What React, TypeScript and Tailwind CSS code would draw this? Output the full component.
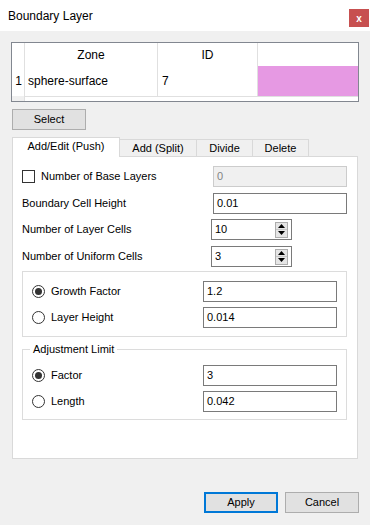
import React from 'react';

const font = { fontFamily: '"Liberation Sans", Arial, sans-serif' };

function TextBox({ value, width = 'w-[134px]', disabled = false }: { value: string; width?: string; disabled?: boolean }) {
    return (
        <div
            className={`${width} h-[21px] flex items-center pl-[3px] border text-[11px] ${
                disabled ? 'border-[#cccccc] bg-[#f0f0f0] text-[#838383]' : 'border-[#7a7a7a] bg-white text-black'
            }`}
        >
            {value}
        </div>
    );
}

function SpinBox({ value }: { value: string }) {
    return (
        <div className="w-[81px] h-[21px] flex items-center justify-between pl-[3px] pr-[3px] border border-[#7a7a7a] bg-white text-[11px]">
            <span>{value}</span>
            <div className="w-[13px] h-[16px] flex flex-col border border-[#adadad] bg-[#e5e5e5]">
                <div className="flex-1 flex items-center justify-center border-b border-[#c8c8c8]">
                    <svg width="7" height="4" viewBox="0 0 7 4"><path d="M3.5 0 L7 4 L0 4 Z" fill="#000" /></svg>
                </div>
                <div className="flex-1 flex items-center justify-center">
                    <svg width="7" height="4" viewBox="0 0 7 4"><path d="M0 0 L7 0 L3.5 4 Z" fill="#000" /></svg>
                </div>
            </div>
        </div>
    );
}

function Radio({ checked }: { checked?: boolean }) {
    return (
        <div className="w-[13px] h-[13px] rounded-full border border-[#333333] bg-white flex items-center justify-center shrink-0">
            {checked && <div className="w-[7px] h-[7px] rounded-full bg-[#333333]" />}
        </div>
    );
}

function RadioRow({ label, value, checked }: { label: string; value: string; checked?: boolean }) {
    return (
        <div className="flex items-center h-[21px]">
            <div className="w-[171px] flex items-center gap-[6px]">
                <Radio checked={checked} />
                <span>{label}</span>
            </div>
            <TextBox value={value} />
        </div>
    );
}

export default function App() {
    return (
        <div className="w-[370px] h-[525px] bg-[#f0f0f0] flex flex-col text-black" style={font}>
            {/* title bar */}
            <div className="h-[31px] bg-white flex justify-between shrink-0">
                <span className="pl-2 self-center text-[12px]">Boundary Layer</span>
                <div className="mt-[9px] mr-[1px] w-[20px] h-[18px] bg-[#c75050] text-white text-[10px] font-bold flex items-center justify-center">
                    x
                </div>
            </div>

            <div className="px-[11px] pt-[11px] flex flex-col">
                {/* zone table */}
                <div className="w-[348px] h-[60px] border border-[#828790] bg-white flex text-[12px]">
                    <div className="w-[13px] flex flex-col border-r border-[#e0e0e0]">
                        <div className="h-[23px]" />
                        <div className="h-[30px] flex items-center justify-end pr-[2px]">1</div>
                        <div className="flex-1 bg-[#f0f0f0]" />
                    </div>
                    <div className="flex-1 flex flex-col">
                        <div className="flex h-[53px]">
                            <div className="w-[133px] flex flex-col border-r border-[#e0e0e0]">
                                <div className="h-[23px] flex items-center justify-center">Zone</div>
                                <div className="h-[30px] flex items-center pl-[3px]">sphere-surface</div>
                            </div>
                            <div className="w-[100px] flex flex-col border-r border-[#e0e0e0]">
                                <div className="h-[23px] flex items-center justify-center">ID</div>
                                <div className="h-[30px] flex items-center pl-[4px]">7</div>
                            </div>
                            <div className="flex-1 flex flex-col">
                                <div className="h-[23px]" />
                                <div className="h-[30px] bg-[#e699e3]" />
                            </div>
                        </div>
                        <div className="flex-1 border-t border-[#e0e0e0]" />
                    </div>
                </div>

                <button className="ml-[1px] mt-[7px] w-[74px] h-[21px] border border-[#adadad] bg-[#e1e1e1] text-[11px]">
                    Select
                </button>

                {/* tabs */}
                <div className="ml-[1px] mt-[7px] flex items-end text-[11px] relative z-10">
                    <div className="w-[108px] h-[20px] bg-white border border-b-0 border-[#d9d9d9] flex items-center justify-center -mb-px pb-[2px]">
                        Add/Edit (Push)
                    </div>
                    <div className="w-[77px] h-[17px] border-t border-r border-[#d9d9d9] flex items-center justify-center">Add (Split)</div>
                    <div className="w-[56px] h-[17px] border-t border-r border-[#d9d9d9] flex items-center justify-center">Divide</div>
                    <div className="w-[56px] h-[17px] border-t border-r border-[#d9d9d9] flex items-center justify-center">Delete</div>
                </div>

                <div className="ml-[1px] w-[346px] h-[303px] bg-white border border-[#d9d9d9] pt-[9px] pl-[9px] text-[11px]">
                    <div className="flex items-center h-[21px]">
                        <div className="w-[191px] flex items-center gap-[6px]">
                            <div className="w-[13px] h-[13px] border border-[#333333] bg-white" />
                            <span>Number of Base Layers</span>
                        </div>
                        <TextBox value="0" disabled />
                    </div>
                    <div className="flex items-center h-[21px] mt-[6px]">
                        <span className="w-[191px]">Boundary Cell Height</span>
                        <TextBox value="0.01" />
                    </div>
                    <div className="flex items-center h-[21px] mt-[5px]">
                        <span className="w-[189px]">Number of Layer Cells</span>
                        <SpinBox value="10" />
                    </div>
                    <div className="flex items-center h-[21px] mt-[6px]">
                        <span className="w-[189px]">Number of Uniform Cells</span>
                        <SpinBox value="3" />
                    </div>

                    <div className="mt-[4px] w-[325px] border border-[#dcdcdc] pt-[9px] pb-[8px] pl-[9px] flex flex-col gap-[5px]">
                        <RadioRow label="Growth Factor" value="1.2" checked />
                        <RadioRow label="Layer Height" value="0.014" />
                    </div>

                    <div className="relative mt-[12px] w-[325px] border border-[#dcdcdc] pt-[15px] pb-[7px] pl-[9px] flex flex-col gap-[5px]">
                        <span className="absolute -top-[8px] left-[7px] px-[3px] bg-white leading-[14px]">Adjustment Limit</span>
                        <RadioRow label="Factor" value="3" checked />
                        <RadioRow label="Length" value="0.042" />
                    </div>
                </div>

                <div className="mt-[33px] flex justify-end gap-[7px] text-[11px]">
                    <button className="w-[74px] h-[21px] border-2 border-[#0078d7] bg-[#e1e1e1]">Apply</button>
                    <button className="w-[74px] h-[21px] border border-[#adadad] bg-[#e1e1e1]">Cancel</button>
                </div>
            </div>
        </div>
    );
}
